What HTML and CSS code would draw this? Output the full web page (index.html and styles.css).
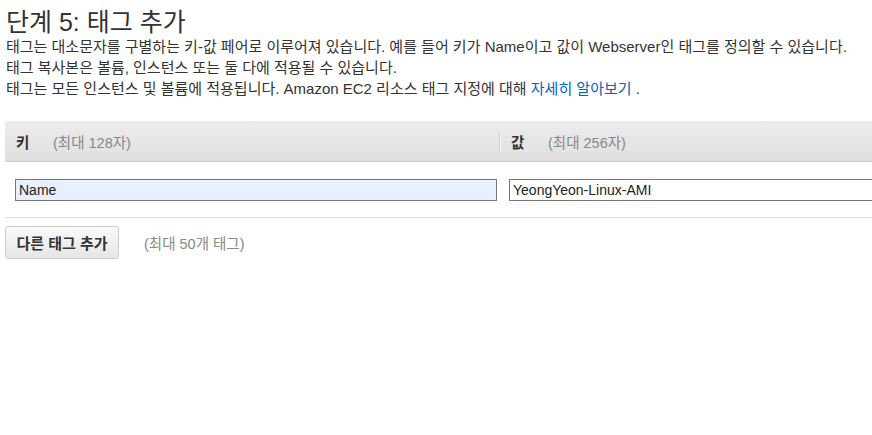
FILE: index.html
```html
<!DOCTYPE html>
<html lang="ko">
<head>
<meta charset="utf-8">
<title>단계 5: 태그 추가</title>
<link rel="stylesheet" href="styles.css">
</head>
<body>
<div class="page">
  <h1 class="title">단계 5: 태그 추가</h1>
  <div class="intro">
    <p>태그는 대소문자를 구별하는 키-값 페어로 이루어져 있습니다. 예를 들어 키가 Name이고 값이 Webserver인 태그를 정의할 수 있습니다.</p>
    <p>태그 복사본은 볼륨, 인스턴스 또는 둘 다에 적용될 수 있습니다.</p>
    <p>태그는 모든 인스턴스 및 볼륨에 적용됩니다. Amazon EC2 리소스 태그 지정에 대해 <a class="link" href="#">자세히 알아보기</a> .</p>
  </div>
  <div class="tags-table">
    <div class="head-cell head-key">
      <span class="head-label">키</span>
      <span class="head-hint">(최대 128자)</span>
    </div>
    <div class="head-cell head-value">
      <span class="head-sep"></span>
      <span class="head-label">값</span>
      <span class="head-hint">(최대 256자)</span>
    </div>
    <div class="row-cell row-key">
      <input class="tag-input tag-input-auto" type="text" value="Name">
    </div>
    <div class="row-cell row-value">
      <input class="tag-input" type="text" value="YeongYeon-Linux-AMI">
    </div>
  </div>
  <div class="actions">
    <button class="add-btn" type="button">다른 태그 추가</button>
    <span class="limit">(최대 50개 태그)</span>
  </div>
</div>
</body>
</html>
```

FILE: styles.css
```css
html, body {
  margin: 0;
  padding: 0;
  overflow: hidden;
  background: #fff;
}
body {
  font-family: "Liberation Sans", Arial, "Noto Sans CJK KR", sans-serif;
  font-size: 15px;
  color: #333;
}
.page {
  padding: 8px 0 0 5px;
  width: 1000px;
}
.title {
  margin: 0 0 0 1px;
  font-size: 25px;
  font-weight: normal;
  line-height: 28px;
  color: #333;
}
.intro {
  margin-left: 1px;
}
.intro p {
  margin: 0;
  line-height: 21px;
}
.link {
  color: #0066c0;
  text-decoration: none;
}
.tags-table {
  margin-top: 22px;
  display: grid;
  grid-template-columns: 494px 494px;
}
.head-cell {
  height: 40px;
  display: flex;
  align-items: center;
  background: linear-gradient(#ececec, #e0e0e0);
  border-bottom: 1px solid #c8c8c8;
  font-size: 14.5px;
}
.head-key {
  padding-left: 11px;
}
.head-label {
  font-weight: bold;
  color: #333;
  width: 14px;
  margin-right: 23px;
}
.head-hint {
  color: #888;
}
.head-sep {
  width: 1px;
  height: 19px;
  background: #cfcfcf;
  border-right: 1px solid #f6f6f6;
  margin-right: 10px;
}
.row-cell {
  padding: 17px 0 16px;
  border-bottom: 1px solid #ddd;
}
.row-key {
  padding-left: 10px;
  padding-right: 2px;
}
.row-value {
  padding-left: 10px;
}
.tag-input {
  display: block;
  box-sizing: border-box;
  width: 100%;
  height: 22px;
  margin: 0;
  padding: 0 3px;
  border: 1px solid #767676;
  background: #fff;
  font-family: "Liberation Sans", Arial, sans-serif;
  font-size: 14px;
  color: #222;
  outline: none;
}
.tag-input-auto {
  background: #e8f0fe;
}
.actions {
  display: flex;
  align-items: center;
  margin-top: 8px;
}
.add-btn {
  box-sizing: border-box;
  height: 33px;
  width: 114px;
  padding: 0;
  border: 1px solid #ccc;
  border-radius: 3px;
  background: linear-gradient(#fafafa, #e6e6e6);
  font-family: "Liberation Sans", Arial, "Noto Sans CJK KR", sans-serif;
  font-size: 15px;
  font-weight: bold;
  color: #333;
}
.limit {
  margin-left: 25px;
  color: #888;
  font-size: 14.5px;
}
```
